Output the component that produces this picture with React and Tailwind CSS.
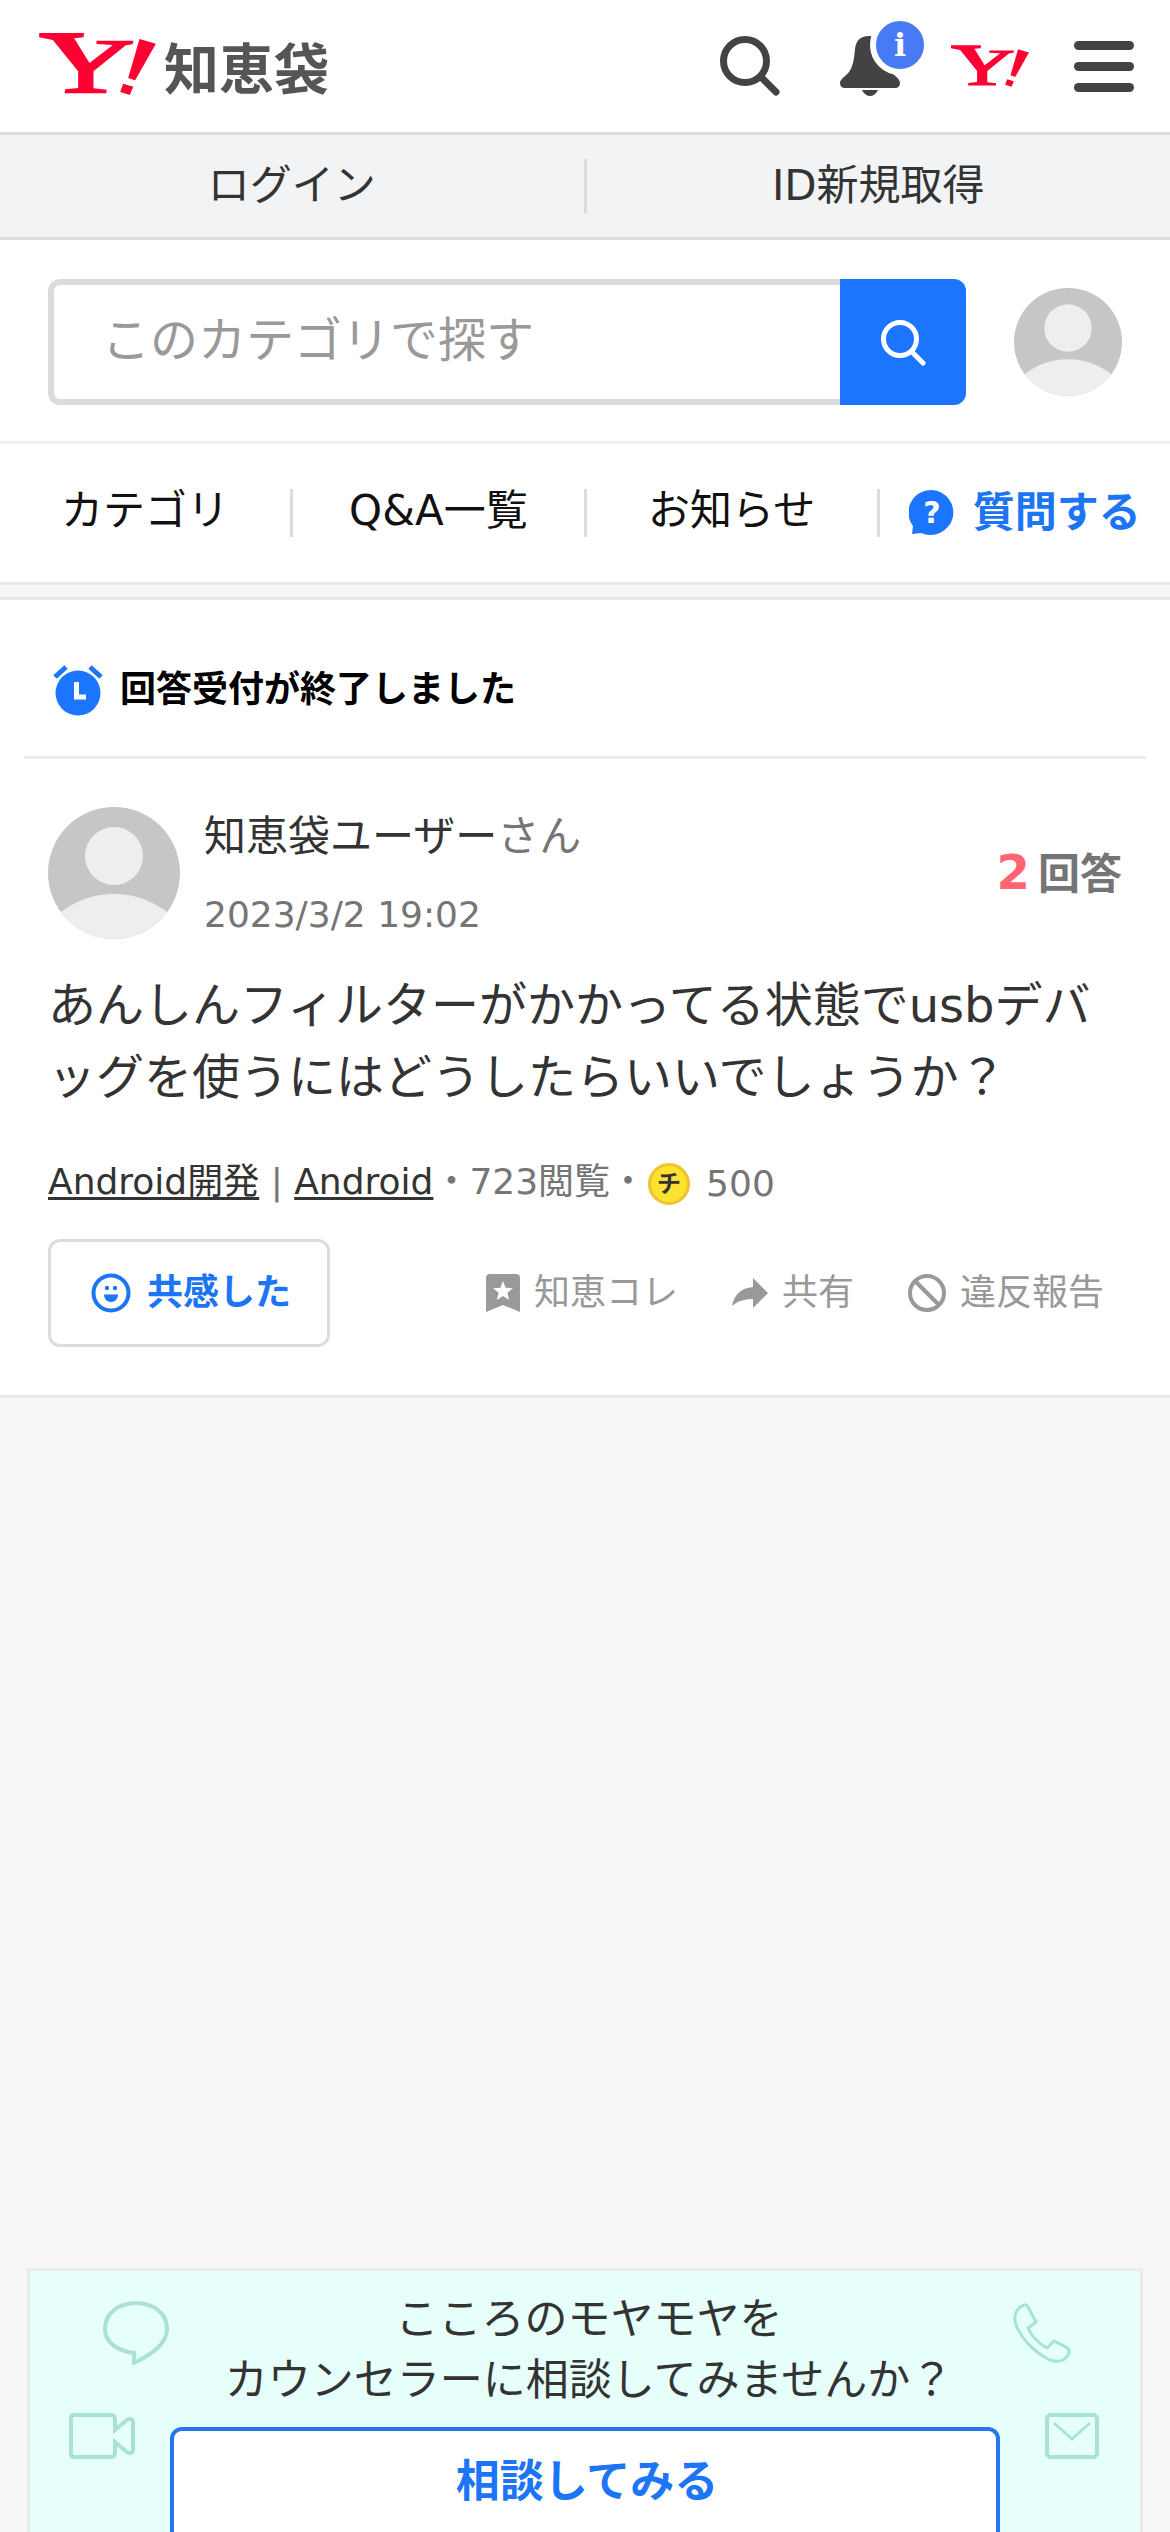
import React from "react";

function YahooMark({ className }) {
  return (
    <svg viewBox="117 98 350 186" className={className} fill="#ff0033" aria-hidden="true">
      <path d="M117 98H252L250 111L222 114L268 188L338 134L289 131V121H400L397 132L377 135L280 213V264L320 268L318 279H193L195 267L234 263V213L158 119L117 111Z" />
      <path d="M418 116L467 130L405 240L384 233Z" />
      <path d="M369 250L399 259L389 284L360 275Z" />
    </svg>
  );
}

function Avatar({ className }) {
  return (
    <svg viewBox="0 0 132 132" className={className} role="img" aria-label="ユーザーアイコン">
      <defs>
        <clipPath id="avatar-clip">
          <circle cx="66" cy="66" r="66" />
        </clipPath>
      </defs>
      <g clipPath="url(#avatar-clip)">
        <rect width="132" height="132" fill="#c6c6c6" />
        <circle cx="66" cy="49" r="29" fill="#eeeeee" />
        <path d="M0 116C22 95 43 87 66 87S110 95 132 116V132H0Z" fill="#eeeeee" />
      </g>
    </svg>
  );
}

function Header() {
  return (
    <header className="flex h-[135px] items-center justify-between border-b-[3px] border-[#d9dbdc] pl-[39px] pr-9">
      <a href="#top" className="flex items-center gap-2" aria-label="Yahoo!知恵袋">
        <YahooMark className="mb-1 h-[62px] w-[117px]" />
        <span className="pt-2 text-[55px] font-bold leading-none text-[#555]">知恵袋</span>
      </a>
      <div className="flex items-center">
        <button type="button" aria-label="検索" className="mr-[60px]">
          <svg viewBox="0 0 60 60" className="size-[60px]" fill="none" stroke="#434343" strokeWidth="7" strokeLinecap="round">
            <circle cx="25" cy="25" r="21.500" />
            <path d="M41 41L56 56" />
          </svg>
        </button>
        <button type="button" aria-label="通知" className="relative mr-[51px]">
          <svg viewBox="0 0 60 60" className="size-[60px]" fill="#434343">
            <path d="M29 0C20 0 16 5 15 13C14 24 13 30 9 36C6 40 0 43 0 47C0 50 2 52 5 52H55C58 52 60 50 60 47C60 43 55 40 51 36C47 31 45 24 44 13C43 5 38 0 29 0Z" />
            <path d="M22 54H38C36 58 33 60 30 60S24 58 22 54Z" />
          </svg>
          <span className="absolute -right-[30px] -top-[21px] flex size-[60px] items-center justify-center rounded-full border-[6px] border-white bg-[#487af5] font-['DejaVu_Serif',serif] text-[32px] font-bold leading-none text-white">
            i
          </span>
        </button>
        <a href="#yahoo" aria-label="Yahoo! JAPAN" className="mr-[45px]">
          <YahooMark className="h-[42px] w-[78px]" />
        </a>
        <button type="button" aria-label="メニュー" className="flex w-[60px] flex-col gap-3">
          <span className="h-[9px] rounded-full bg-[#434343]" />
          <span className="h-[9px] rounded-full bg-[#434343]" />
          <span className="h-[9px] rounded-full bg-[#434343]" />
        </button>
      </div>
    </header>
  );
}

function LoginBar() {
  return (
    <div className="flex h-[105px] items-center border-b-[3px] border-[#d9dbdc] bg-[#f1f3f5] text-[42px] leading-[54px]">
      <a href="#login" className="flex-1 text-center">ログイン</a>
      <span className="h-[54px] w-[3px] bg-[#d9dbdc]" />
      <a href="#register" className="flex-1 text-center">ID新規取得</a>
    </div>
  );
}

function SearchRow() {
  return (
    <form className="flex items-center gap-12 border-b-[3px] border-[#f0f0f0] px-12 pb-9 pt-[39px]" onSubmit={(e) => e.preventDefault()}>
      <div className="flex h-[126px] min-w-0 flex-1">
        <input
          type="search"
          aria-label="このカテゴリで探す"
          placeholder="このカテゴリで探す"
          className="min-w-0 flex-1 rounded-l-xl border-[6px] border-r-0 border-[#dcdcdc] bg-white px-12 pb-1 text-[48px] leading-[72px] outline-none placeholder:text-[#999]"
        />
        <button type="submit" aria-label="検索" className="flex w-[126px] items-center justify-center rounded-r-xl bg-[#1b75ff]">
          <svg viewBox="0 0 48 48" className="size-12" fill="none" stroke="#fff" strokeWidth="5" strokeLinecap="round">
            <circle cx="21" cy="21" r="16.500" />
            <path d="M33 34L44 45" />
          </svg>
        </button>
      </div>
      <Avatar className="size-[108px]" />
    </form>
  );
}

function NavTabs() {
  return (
    <nav className="flex h-[141px] items-center border-b-[3px] border-[#e8e8e8] text-[42px] leading-[54px] text-[#111]">
      <a href="#category" className="flex-1 pb-1 text-center">カテゴリ</a>
      <span className="h-12 w-[3px] bg-[#dcdcdc]" />
      <a href="#list" className="flex-1 pb-1 text-center">Q&amp;A一覧</a>
      <span className="h-12 w-[3px] bg-[#dcdcdc]" />
      <a href="#news" className="flex-1 pb-1 text-center">お知らせ</a>
      <span className="h-12 w-[3px] bg-[#dcdcdc]" />
      <a href="#ask" className="flex flex-1 items-center justify-center gap-[18px] font-bold text-[#1b75f5]">
        <span className="relative flex size-[46px] items-center justify-center text-[30px] leading-none text-white">
          <svg viewBox="0 0 46 46" className="absolute inset-0" fill="#1b75ff" aria-hidden="true">
            <path d="M23 0A23 22.500 0 1 1 12 43L3 44L4 36A23 22.500 0 0 1 23 0Z" />
          </svg>
          <span className="relative">?</span>
        </span>
        <span>質問する</span>
      </a>
    </nav>
  );
}

function StatusLine() {
  return (
    <div className="mx-6 flex h-[159px] items-center gap-4 border-b-[3px] border-[#ebebeb] px-7 pt-6">
      <svg viewBox="0 0 52 52" className="size-[52px]" aria-hidden="true">
        <circle cx="26" cy="29" r="22.500" fill="#1b75ff" />
        <path d="M3 13L14 3M38 3L49 13" stroke="#1b75f5" strokeWidth="5" fill="none" />
        <path d="M24.500 18V33H34" stroke="#fff" strokeWidth="5" fill="none" />
      </svg>
      <p className="text-[36px] font-bold leading-[48px] text-black">回答受付が終了しました</p>
    </div>
  );
}

function Coin() {
  return (
    <span className="flex size-[42px] items-center justify-center rounded-full border-[3px] border-[#eec32d] bg-[#fde230] text-[24px] font-bold leading-none text-[#333]">
      チ
    </span>
  );
}

function Meta() {
  return (
    <div className="mt-[42px] flex h-[54px] items-center gap-0.5 text-[36px] leading-[54px] text-[#757575]">
      <p>
        <a href="#android-dev" className="text-[#333] underline decoration-[3px] underline-offset-[3px]">Android開発</a>
        {" | "}
        <a href="#android" className="text-[#333] underline decoration-[3px] underline-offset-[3px]">Android</a>
        ・723閲覧・
      </p>
      <div className="flex items-center gap-4 pt-1">
        <Coin />
        <span>500</span>
      </div>
    </div>
  );
}

function Actions() {
  return (
    <div className="mt-[30px] flex items-center justify-between text-[36px] leading-[48px] text-[#999]">
      <button type="button" className="flex h-[108px] w-[282px] items-center justify-center gap-4 rounded-xl border-[3px] border-[#dcdcdc] pl-1 font-bold text-[#1b75f5]">
        <svg viewBox="0 0 40 40" className="size-10" aria-hidden="true">
          <circle cx="20" cy="20" r="17.500" fill="none" stroke="#1b75f5" strokeWidth="4" />
          <circle cx="16" cy="15" r="2.200" fill="#1b75f5" />
          <circle cx="24" cy="15" r="2.200" fill="#1b75f5" />
          <path d="M13 21.500H27C27 26 24 29 20 29S13 26 13 21.500Z" fill="#1b75f5" />
        </svg>
        共感した
      </button>
      <div className="flex items-center gap-[54px] pr-[18px]">
        <button type="button" className="flex items-center gap-[14px]">
          <svg viewBox="0 0 34 38" className="h-[38px] w-[34px]" aria-hidden="true">
            <path d="M4 0H30Q34 0 34 4V38L17 31L0 38V4Q0 0 4 0Z" fill="#999" />
            <path d="M17 7L19.600 13.800L27 14.200L21.300 18.800L23.200 26L17 22L10.800 26L12.700 18.800L7 14.200L14.400 13.800Z" fill="#fff" />
          </svg>
          知恵コレ
        </button>
        <button type="button" className="flex items-center gap-[14px]">
          <svg viewBox="0 0 36 30" className="h-[30px] w-9" fill="#999" aria-hidden="true">
            <path d="M21 0L36 15L21 30V21C12 21 6 23 0 28C2 17 9 10 21 9Z" />
          </svg>
          共有
        </button>
        <button type="button" className="flex items-center gap-[14px]">
          <svg viewBox="0 0 38 38" className="size-[38px]" fill="none" stroke="#999" strokeWidth="4" aria-hidden="true">
            <circle cx="19" cy="19" r="17" />
            <path d="M7 7L31 31" />
          </svg>
          違反報告
        </button>
      </div>
    </div>
  );
}

function Question() {
  return (
    <article className="px-12 pb-12 pt-12">
      <div className="flex items-center">
        <Avatar className="size-[132px]" />
        <div className="ml-6 flex-1">
          <p className="text-[42px] leading-[60px]">
            知恵袋ユーザー<span className="text-[#757575]">さん</span>
          </p>
          <p className="mt-6 text-[36px] leading-[48px] text-[#757575]">2023/3/2 19:02</p>
        </div>
        <p className="flex items-baseline gap-2 text-[42px] font-bold leading-[60px] text-[#757575]">
          <span className="text-[48px] text-[#ff6473]">2</span>回答
        </p>
      </div>
      <h1 className="mt-[30px] break-all text-[48px] leading-[72px]">
        あんしんフィルターがかかってる状態でusbデバッグを使うにはどうしたらいいでしょうか？
      </h1>
      <Meta />
      <Actions />
    </article>
  );
}

function CounselingBanner() {
  return (
    <section className="mx-[27px] flex border-[3px] border-b-0 border-[#ebebeb] bg-[#e6fffa]">
      <div className="w-[140px] pt-[30px]">
        <svg viewBox="0 0 66 64" className="ml-[73px] h-16 w-[66px]" fill="none" stroke="#a9e2d3" strokeWidth="4">
          <path d="M31 52C14 50 2 41 2 28C2 12 16 2 33 2S64 12 64 28C64 43 49 53 31 62Z" />
        </svg>
        <svg viewBox="0 0 66 46" className="ml-[39px] mt-12 h-[46px] w-[66px]" fill="none" stroke="#a9e2d3" strokeWidth="4">
          <path d="M5 2H42Q46 2 46 6V17L58 7Q64 4 64 10V36Q64 42 58 39L46 29V40Q46 44 42 44H5Q2 44 2 41V5Q2 2 5 2Z" />
        </svg>
      </div>
      <div className="min-w-0 flex-1">
        <p className="pl-2 pt-[18px] text-center text-[43px] leading-[61px]">
          こころのモヤモヤを
          <br />
          カウンセラーに相談してみませんか？
        </p>
        <button type="button" className="mt-4 h-[105px] w-full rounded-t-xl border-[4px] border-b-0 border-[#2576ee] bg-white pl-1 text-[44px] font-bold leading-[60px] text-[#1b75f5]">
          相談してみる
        </button>
      </div>
      <div className="w-[140px] pt-8">
        <svg viewBox="0 0 58 60" className="ml-[13px] h-[60px] w-[58px]" fill="none" stroke="#a9e2d3" strokeWidth="3" strokeLinejoin="round">
          <path d="M11 2Q13 1 15 4L23 19L15 25Q20 37 34 45L41 38L53 44Q58 47 55 52C51 59 43 60 35 56C20 48 8 35 3 22C0 13 3 5 11 2Z" />
        </svg>
        <svg viewBox="0 0 54 46" className="ml-[45px] mt-[50px] h-[46px] w-[54px]" fill="none" stroke="#a9e2d3" strokeWidth="4">
          <rect x="2" y="2" width="50" height="42" rx="4" />
          <path d="M9 10L27 26L45 10" strokeWidth="3" />
        </svg>
      </div>
    </section>
  );
}

export default function App() {
  return (
    <div className="flex min-h-screen flex-col bg-[#f6f6f6] font-['DejaVu_Sans','Noto_Sans_CJK_JP',sans-serif] text-[#333]" lang="ja">
      <div className="bg-white">
        <Header />
        <LoginBar />
        <SearchRow />
        <NavTabs />
      </div>
      <main className="mt-3 border-y-[3px] border-[#e8e8e8] bg-white">
        <StatusLine />
        <Question />
      </main>
      <div className="min-h-[600px] flex-1" />
      <CounselingBanner />
    </div>
  );
}
